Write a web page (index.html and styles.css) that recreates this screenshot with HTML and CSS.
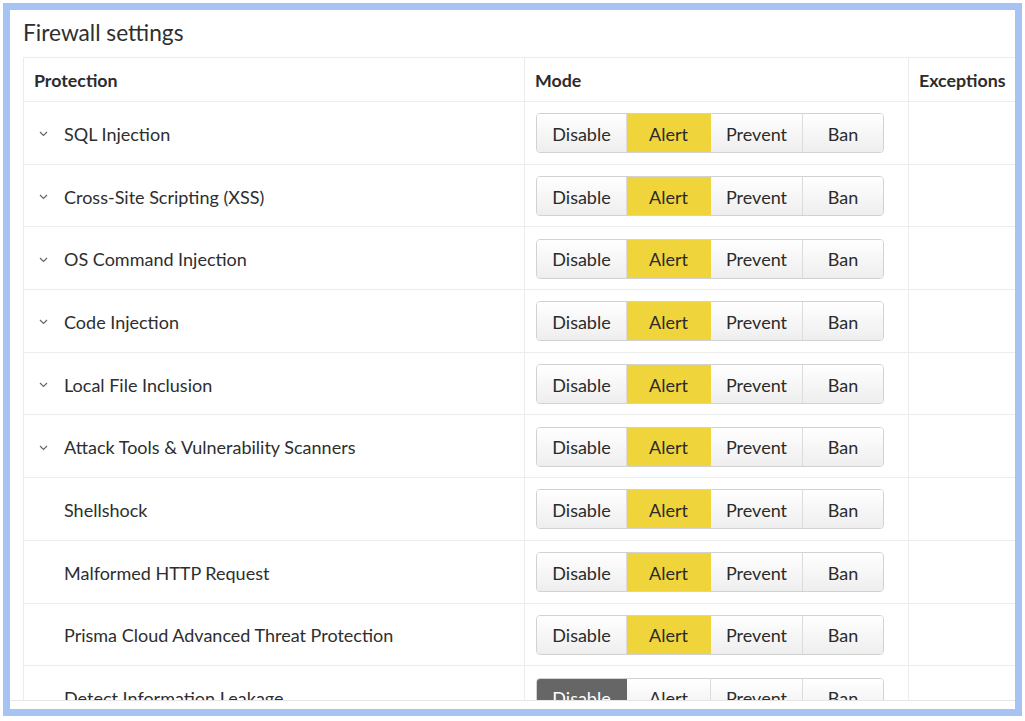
FILE: index.html
```html
<!DOCTYPE html>
<html>
<head>
<meta charset="utf-8">
<link rel="stylesheet" href="styles.css">
</head>
<body>
<div class="frame">
  <h1 class="title">Firewall settings</h1>
  <div class="scroll">
    <table class="grid">
      <thead>
        <tr>
          <th class="c-prot">Protection</th>
          <th class="c-mode">Mode</th>
          <th class="c-exc">Exceptions</th>
        </tr>
      </thead>
      <tbody>
        <tr><td class="c-prot"><span class="chev"><svg width="9" height="6" viewBox="0 0 9 6"><path d="M1 1 L4.5 4.5 L8 1" fill="none" stroke="#666" stroke-width="1.2"/></svg></span>SQL Injection</td><td class="c-mode"><div class="seg"><span class="b b1">Disable</span><span class="b b2 on">Alert</span><span class="b b3">Prevent</span><span class="b b4">Ban</span></div></td><td></td></tr>
        <tr><td class="c-prot"><span class="chev"><svg width="9" height="6" viewBox="0 0 9 6"><path d="M1 1 L4.5 4.5 L8 1" fill="none" stroke="#666" stroke-width="1.2"/></svg></span>Cross-Site Scripting (XSS)</td><td class="c-mode"><div class="seg"><span class="b b1">Disable</span><span class="b b2 on">Alert</span><span class="b b3">Prevent</span><span class="b b4">Ban</span></div></td><td></td></tr>
        <tr><td class="c-prot"><span class="chev"><svg width="9" height="6" viewBox="0 0 9 6"><path d="M1 1 L4.5 4.5 L8 1" fill="none" stroke="#666" stroke-width="1.2"/></svg></span>OS Command Injection</td><td class="c-mode"><div class="seg"><span class="b b1">Disable</span><span class="b b2 on">Alert</span><span class="b b3">Prevent</span><span class="b b4">Ban</span></div></td><td></td></tr>
        <tr><td class="c-prot"><span class="chev"><svg width="9" height="6" viewBox="0 0 9 6"><path d="M1 1 L4.5 4.5 L8 1" fill="none" stroke="#666" stroke-width="1.2"/></svg></span>Code Injection</td><td class="c-mode"><div class="seg"><span class="b b1">Disable</span><span class="b b2 on">Alert</span><span class="b b3">Prevent</span><span class="b b4">Ban</span></div></td><td></td></tr>
        <tr><td class="c-prot"><span class="chev"><svg width="9" height="6" viewBox="0 0 9 6"><path d="M1 1 L4.5 4.5 L8 1" fill="none" stroke="#666" stroke-width="1.2"/></svg></span>Local File Inclusion</td><td class="c-mode"><div class="seg"><span class="b b1">Disable</span><span class="b b2 on">Alert</span><span class="b b3">Prevent</span><span class="b b4">Ban</span></div></td><td></td></tr>
        <tr><td class="c-prot"><span class="chev"><svg width="9" height="6" viewBox="0 0 9 6"><path d="M1 1 L4.5 4.5 L8 1" fill="none" stroke="#666" stroke-width="1.2"/></svg></span>Attack Tools &amp; Vulnerability Scanners</td><td class="c-mode"><div class="seg"><span class="b b1">Disable</span><span class="b b2 on">Alert</span><span class="b b3">Prevent</span><span class="b b4">Ban</span></div></td><td></td></tr>
        <tr><td class="c-prot"><span class="chev"></span>Shellshock</td><td class="c-mode"><div class="seg"><span class="b b1">Disable</span><span class="b b2 on">Alert</span><span class="b b3">Prevent</span><span class="b b4">Ban</span></div></td><td></td></tr>
        <tr><td class="c-prot"><span class="chev"></span>Malformed HTTP Request</td><td class="c-mode"><div class="seg"><span class="b b1">Disable</span><span class="b b2 on">Alert</span><span class="b b3">Prevent</span><span class="b b4">Ban</span></div></td><td></td></tr>
        <tr><td class="c-prot"><span class="chev"></span>Prisma Cloud Advanced Threat Protection</td><td class="c-mode"><div class="seg"><span class="b b1">Disable</span><span class="b b2 on">Alert</span><span class="b b3">Prevent</span><span class="b b4">Ban</span></div></td><td></td></tr>
        <tr><td class="c-prot"><span class="chev"></span>Detect Information Leakage</td><td class="c-mode"><div class="seg"><span class="b b1 dark">Disable</span><span class="b b2">Alert</span><span class="b b3">Prevent</span><span class="b b4">Ban</span></div></td><td></td></tr>
      </tbody>
    </table>
  </div>
</div>
</body>
</html>
```

FILE: styles.css
```css
html, body {
  margin: 0;
  padding: 0;
  background: #ffffff;
}
body {
  font-family: Lato, "Open Sans", "Liberation Sans", sans-serif;
  color: #2e2e2e;
}
.frame {
  box-sizing: border-box;
  width: 1019px;
  height: 713px;
  margin: 3px;
  border: 7px solid #a6c3f3;
  background: #fff;
  display: flex;
  flex-direction: column;
}
.title {
  margin: 0;
  height: 47px;
  box-sizing: border-box;
  padding: 10px 0 0 13px;
  font-size: 22.7px;
  font-weight: 400;
  line-height: 26px;
  color: #2f2f2f;
}
.scroll {
  height: 643px;
  padding-left: 13px;
  overflow: hidden;
  border-bottom: 1px solid #e6e6e6;
}
.grid {
  border-collapse: collapse;
  table-layout: fixed;
  width: 1040px;
}
.grid th, .grid td {
  border: 1px solid #ececec;
  padding: 0;
  vertical-align: middle;
}
.grid thead th {
  height: 44px;
  text-align: left;
  font-size: 17.8px;
  font-weight: 700;
  color: #2c2c2c;
  padding-left: 10px;
  padding-top: 1px;
  box-sizing: border-box;
}
.c-prot { width: 501px; }
.c-mode { width: 384px; }
.c-exc { width: 155px; }
.grid tbody td {
  height: 62.7px;
  box-sizing: border-box;
  font-size: 18px;
  color: #2e2e2e;
}
.grid tbody td.c-prot {
  padding-left: 15px;
  padding-top: 2px;
}
.chev {
  display: inline-block;
  width: 25px;
  vertical-align: middle;
  position: relative;
  top: -2px;
}
.chev svg { display: block; }
.grid tbody td.c-mode {
  padding-left: 11px;
  padding-top: 1px;
}
.seg {
  display: flex;
  width: 348px;
  height: 40px;
  box-sizing: border-box;
  border: 1px solid #d2d2d2;
  border-radius: 4px;
  overflow: hidden;
}
.b {
  display: flex;
  align-items: center;
  justify-content: center;
  box-sizing: border-box;
  height: 100%;
  padding-top: 1px;
  font-size: 18px;
  color: #2b2b2b;
  background: linear-gradient(#ffffff, #eeeeee);
  border-right: 1px solid #dcdcdc;
}
.b1 { width: 90px; }
.b2 { width: 84px; }
.b3 { width: 92px; }
.b4 { width: 80px; border-right: none; }
.b.on {
  background: #f0d43c;
  border-right-color: #f0d43c;
}
.b.dark {
  background: #666666;
  color: #ffffff;
  border-right-color: #666666;
}
```
